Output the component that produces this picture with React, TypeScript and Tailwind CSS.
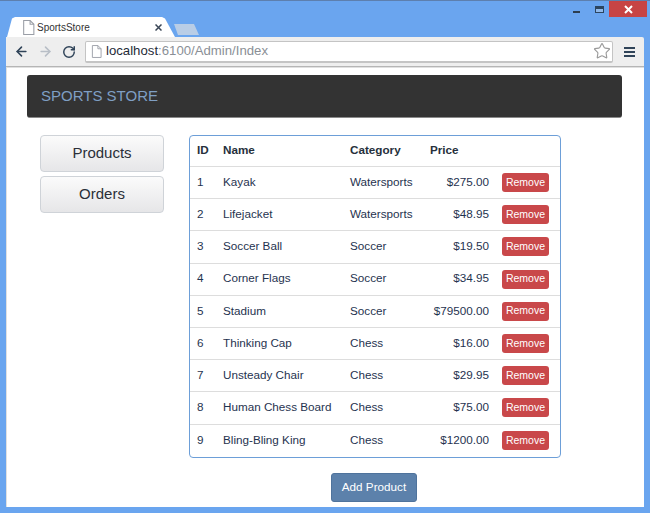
import { ArrowLeft, ArrowRight, RotateCw, Star } from "lucide-react";

const products = [
  { id: 1, name: "Kayak", category: "Watersports", price: "$275.00" },
  { id: 2, name: "Lifejacket", category: "Watersports", price: "$48.95" },
  { id: 3, name: "Soccer Ball", category: "Soccer", price: "$19.50" },
  { id: 4, name: "Corner Flags", category: "Soccer", price: "$34.95" },
  { id: 5, name: "Stadium", category: "Soccer", price: "$79500.00" },
  { id: 6, name: "Thinking Cap", category: "Chess", price: "$16.00" },
  { id: 7, name: "Unsteady Chair", category: "Chess", price: "$29.95" },
  { id: 8, name: "Human Chess Board", category: "Chess", price: "$75.00" },
  { id: 9, name: "Bling-Bling King", category: "Chess", price: "$1200.00" },
];

function PageIcon({ size = 13 }: { size?: number }) {
  return (
    <svg width={size} height={size + 2} viewBox="0 0 12 14" fill="#fff" stroke="#9a9ea6" strokeWidth="1">
      <path d="M1.5 .5h6l3.5 3.5v9.5h-9.5z" />
      <path d="M7.5 .5v3.5h3.5" fill="none" />
    </svg>
  );
}

function TitleBar() {
  return (
    <div className="mr-[-3px] flex h-[16px] justify-end">
      <div className="flex h-[16px] w-[20px] items-start justify-center pt-[10px]">
        <div className="h-[2px] w-[7px] bg-[#2c3e50]" />
      </div>
      <div className="ml-[3px] flex h-[16px] w-[20px] items-start justify-center pt-[5px]">
        <div className="h-[7px] w-[9px] border border-t-[3px] border-[#2c4560] bg-[#8fb8ea]" />
      </div>
      <div className="flex h-[16px] w-[38px] items-center justify-center bg-[#c74444]">
        <svg width="9" height="9" viewBox="0 0 9 9" stroke="#fff" strokeWidth="2">
          <path d="M1 1l7 7M8 1l-7 7" />
        </svg>
      </div>
    </div>
  );
}

function TabStrip() {
  return (
    <div className="flex h-[20px] items-end pl-[1px]">
      <div className="flex h-[20px] w-[168px] items-center bg-white pl-[15px] pr-[13px] [clip-path:polygon(0_100%,5px_8%,8px_0,155px_0,158px_8%,168px_100%)]">
        <PageIcon />
        <span className="ml-[2px] flex-1 text-[10px] text-[#333]">SportsStore</span>
        <svg width="7" height="7" viewBox="0 0 7 7" stroke="#3a4656" strokeWidth="1.5">
          <path d="M.5.5l6 6M6.5.5l-6 6" />
        </svg>
      </div>
      <div className="mb-[2px] ml-[-1px] h-[11px] w-[25px] bg-[#b9cde6] [clip-path:polygon(0_0,20px_0,25px_100%,4px_100%)]" />
    </div>
  );
}

function Toolbar() {
  return (
    <div className="flex h-[30px] items-center rounded-tr-[2px] border-b border-[#b5b5b5] bg-[#eeeeee] pl-[8px]">
      <ArrowLeft size={15} strokeWidth={2.5} className="text-[#2f4358]" />
      <ArrowRight size={15} strokeWidth={2.5} className="ml-[9px] text-[#b8bec6]" />
      <RotateCw size={14} strokeWidth={2.5} className="ml-[9px] text-[#2f4358]" />
      <div className="ml-[9px] flex h-[22px] w-[528px] items-center rounded-[2px] border border-b-2 border-[#c4c4c4] bg-white pl-[5px] pr-[1px]">
        <PageIcon size={11} />
        <span className="ml-[4px] flex-1 text-[13.2px] leading-none text-[#1f2b38]">
          localhost<span className="text-[#8a8f96]">:6100/Admin/Index</span>
        </span>
        <Star size={18} strokeWidth={1.5} className="text-[#9a9a9a]" />
      </div>
      <div className="ml-[11px] flex flex-col gap-[2px]">
        <div className="h-[2px] w-[11px] bg-[#2f4358]" />
        <div className="h-[2px] w-[11px] bg-[#2f4358]" />
        <div className="h-[2px] w-[11px] bg-[#2f4358]" />
      </div>
    </div>
  );
}

function SideButton({ label }: { label: string }) {
  return (
    <button className="flex h-[37px] w-[124px] items-center justify-center rounded-[4px] border border-[#cfd3d8] bg-gradient-to-b from-[#fbfbfb] to-[#e6e6e8] pb-[1px] text-[15px] text-[#2a2f38]">
      {label}
    </button>
  );
}

function ProductTable() {
  return (
    <div className="w-[372px] overflow-hidden rounded-[4px] border border-[#6d9fd8] text-[11.7px] text-[#1f3350]">
      <div className="flex h-[31px] items-center border-b border-[#dddddd] pb-[2px] font-bold text-[#26303c]">
        <div className="w-[33px] pl-[7px]">ID</div>
        <div className="w-[127px]">Name</div>
        <div className="w-[80px]">Category</div>
        <div>Price</div>
      </div>
      {products.map((p, i) => (
        <div
          key={p.id}
          className={`flex h-[32.2px] items-center ${i < products.length - 1 ? "border-b border-[#dddddd]" : ""}`}
        >
          <div className="mb-[2px] w-[33px] pl-[7px]">{p.id}</div>
          <div className="mb-[2px] w-[127px]">{p.name}</div>
          <div className="mb-[2px] w-[80px]">{p.category}</div>
          <div className="mb-[2px] w-[59px] text-right">{p.price}</div>
          <button className="ml-[13px] flex h-[19px] w-[47px] items-center justify-center rounded-[3px] bg-[#c9484a] text-[10.5px] text-white">
            Remove
          </button>
        </div>
      ))}
    </div>
  );
}

export default function App() {
  return (
    <div className="flex h-[513px] w-[650px] flex-col overflow-hidden border-t border-[#5d7fae] bg-[#6aa5ef] px-[6px] pb-[6px] font-['Liberation_Sans',Arial,sans-serif]">
      <TitleBar />
      <TabStrip />
      <Toolbar />
      <div className="flex flex-1 flex-col border-l border-t border-[#e0e0e0] bg-white pl-[20px] pr-[22px] pt-[7px]">
        <div className="flex h-[43px] items-center rounded-[3px] border-b border-[#8a8a8a] bg-[#333333] pl-[14px] text-[15px] text-[#7f9fc4]">
          SPORTS STORE
        </div>
        <div className="mt-[17px] flex items-start pl-[13px]">
          <div className="flex flex-col gap-[4px]">
            <SideButton label="Products" />
            <SideButton label="Orders" />
          </div>
          <div className="ml-[25px] flex flex-col items-center">
            <ProductTable />
            <button className="mr-[2px] mt-[15px] flex h-[29px] w-[86px] items-center justify-center rounded-[3px] border border-[#4f739c] bg-[#5c81ab] text-[11.7px] text-white">
              Add Product
            </button>
          </div>
        </div>
      </div>
    </div>
  );
}
